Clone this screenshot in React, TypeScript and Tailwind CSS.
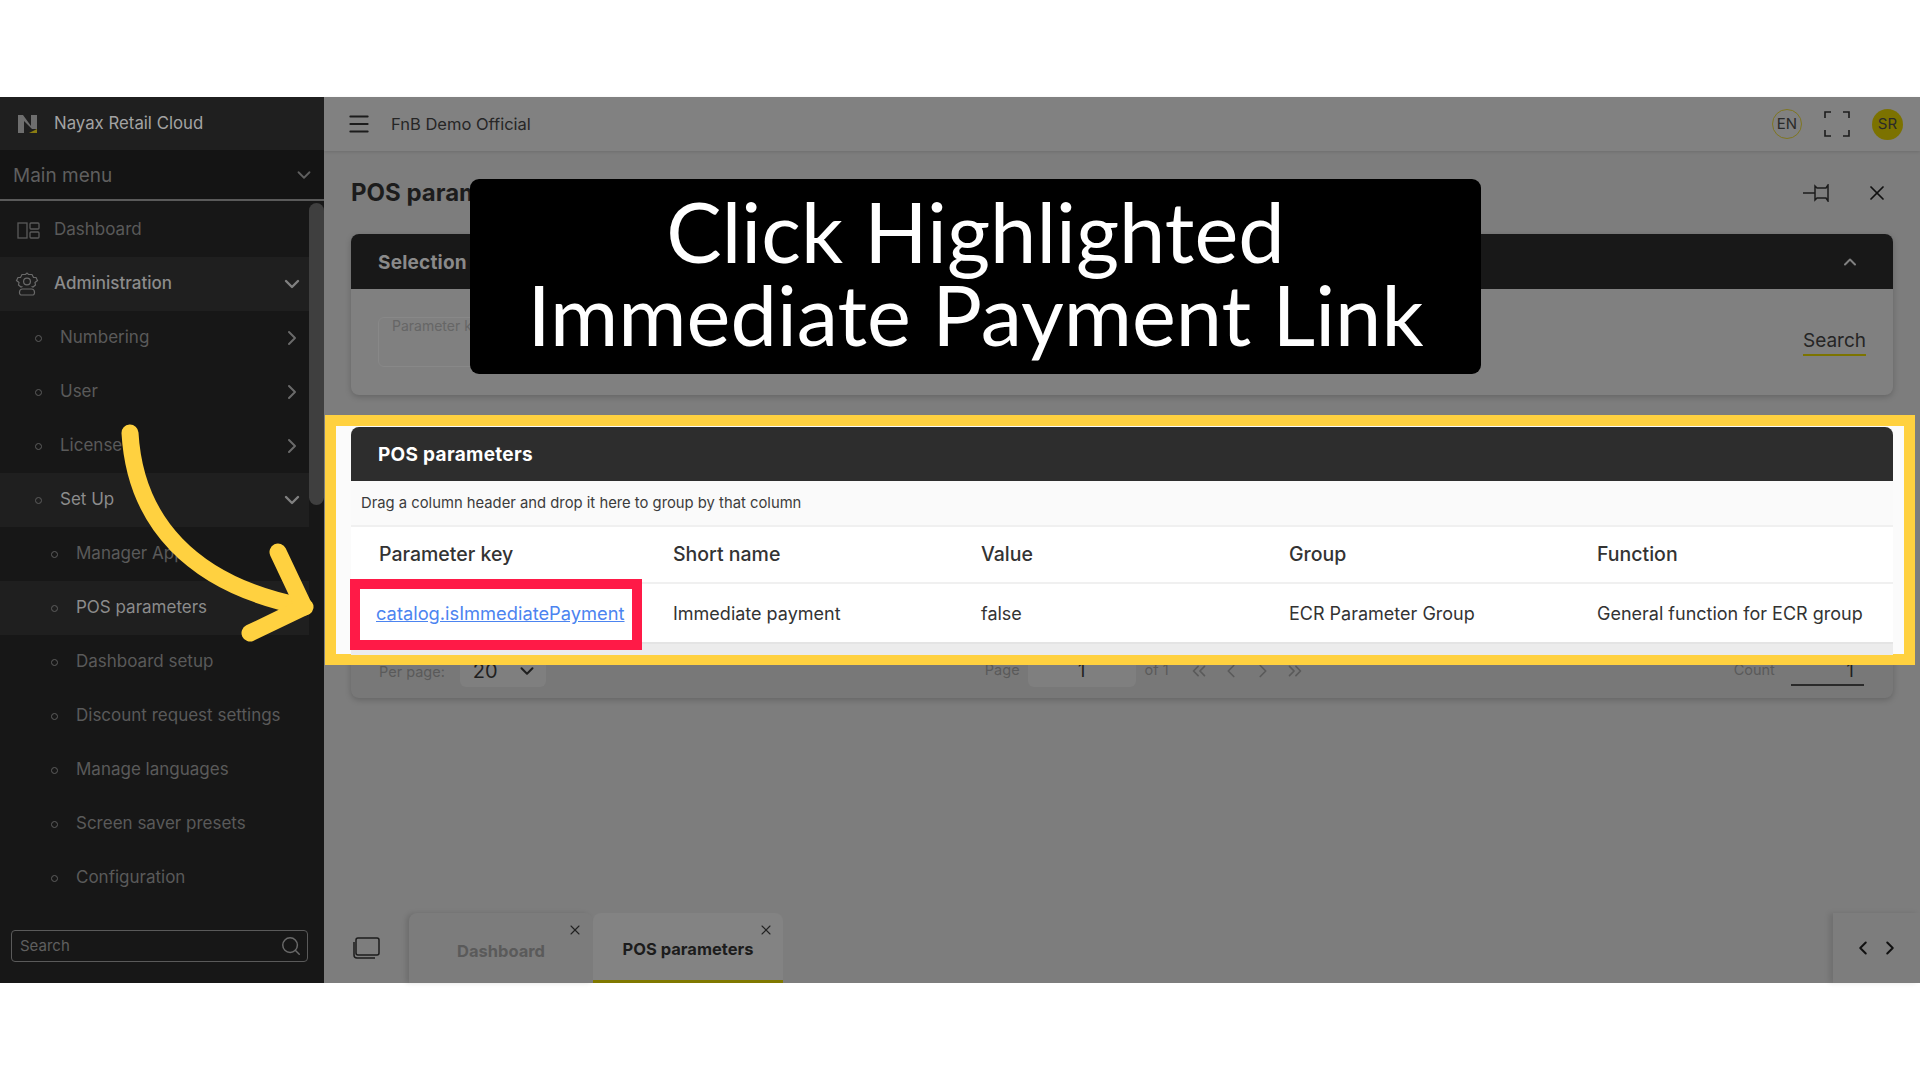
import { ChevronDown, ChevronLeft, ChevronRight, ChevronUp, ChevronsLeft, ChevronsRight, Menu, Search, X } from "lucide-react";

const menuRows = [
  { label: "Numbering", level: 1, chevron: "right" },
  { label: "User", level: 1, chevron: "right" },
  { label: "License", level: 1, chevron: "right" },
  { label: "Set Up", level: 1, chevron: "down", open: true },
  { label: "Manager App", level: 2 },
  { label: "POS parameters", level: 2, active: true },
  { label: "Dashboard setup", level: 2 },
  { label: "Discount request settings", level: 2 },
  { label: "Manage languages", level: 2 },
  { label: "Screen saver presets", level: 2 },
  { label: "Configuration", level: 2 },
];

const columns = ["Parameter key", "Short name", "Value", "Group", "Function"];

function MenuRow({ label, level, chevron, open, active }: { label: string; level: number; chevron?: string; open?: boolean; active?: boolean }) {
  const highlighted = open || active;
  return (
    <div className={`flex h-[54px] items-center ${highlighted ? "bg-[#1f1f1f]" : ""} ${level === 1 ? "pl-[35px]" : "pl-[51px]"}`}>
      <span className="h-[7px] w-[7px] rounded-full border border-[#5c5c5c]" />
      <span className={`ml-[18px] text-[17px] ${highlighted ? "text-[#8c8c8c]" : "text-[#5a5a5a]"}`}>{label}</span>
      {chevron === "right" && <ChevronRight className="ml-auto mr-[5px] h-[24px] w-[24px] text-[#6a6a6a]" strokeWidth={2} />}
      {chevron === "down" && <ChevronDown className="ml-auto mr-[5px] h-[24px] w-[24px] text-[#808080]" strokeWidth={2.4} />}
    </div>
  );
}

function Sidebar() {
  return (
    <aside className="relative flex w-[324px] shrink-0 flex-col bg-[#171717]">
      <div className="flex h-[53px] items-center bg-[#1f1f1f] pl-[18px]">
        <svg width="20" height="20" viewBox="0 0 20 20">
          <polygon points="0,1 5,1 13,12 13,1 19,1 19,15 14,15 6,7 6,19 0,19" fill="#6e6e6e" />
          <polygon points="11,19 19,15 19,19" fill="#8a7d12" />
        </svg>
        <span className="ml-[16px] pt-[1px] text-[16.8px] text-[#a3a3a3]">Nayax Retail Cloud</span>
      </div>
      <div className="flex h-[51px] items-center justify-between border-b-2 border-[#5a5a5a] bg-[#141414] pl-[13px] pr-[9px]">
        <span className="pt-[3px] text-[19px] text-[#5f5f5f]">Main menu</span>
        <ChevronDown className="h-[22px] w-[22px] text-[#5f5f5f]" strokeWidth={2} />
      </div>
      <div className="mt-[2px] w-[309px]">
        <div className="flex h-[54px] items-center pl-[17px]">
          <svg width="23" height="17" viewBox="0 0 23 17" fill="none" stroke="#5a5a5a" strokeWidth="1.3">
            <rect x="1" y="1" width="9" height="15" />
            <rect x="13" y="1" width="9" height="6" rx="1" />
            <rect x="13" y="10" width="9" height="6" rx="1" />
          </svg>
          <span className="ml-[14px] text-[17px] text-[#5a5a5a]">Dashboard</span>
        </div>
        <div className="flex h-[54px] items-center bg-[#1f1f1f] pl-[15px]">
          <svg width="24" height="24" viewBox="0 0 24 24" fill="none" stroke="#6a6a6a" strokeWidth="1.2">
            <path d="M7.5 14.5L6 15L3.5 13L4 10.5L1.5 8.5L3 5.5L5.5 5.5L7 2.5H10.5L12 1L13.5 2.5H17L18.5 5.5L21 5.5L22.5 8.5L20 10.5L20.5 13L18 15L16.5 14.5" />
            <circle cx="12" cy="9.5" r="3.4" />
            <path d="M6 23H18C20 23 20.5 17 16.5 17H7.5C3.5 17 4 23 6 23Z" />
          </svg>
          <span className="ml-[15px] text-[17px] font-medium text-[#8c8c8c]">Administration</span>
          <ChevronDown className="ml-auto mr-[5px] h-[24px] w-[24px] text-[#808080]" strokeWidth={2.4} />
        </div>
        {menuRows.map((row) => (
          <MenuRow key={row.label} {...row} />
        ))}
      </div>
      <div className="absolute right-0 top-[106px] h-[302px] w-[15px] rounded-full bg-[#3f3f3f]" />
      <div className="ml-[11px] mt-[25px] flex h-[32px] w-[297px] items-center justify-between rounded-[4px] border border-[#5a5a5a] pl-[8px] pr-[5px]">
        <span className="pt-[1px] text-[15px] text-[#5f5f5f]">Search</span>
        <Search className="h-[22px] w-[22px] text-[#6a6a6a]" strokeWidth={1.6} />
      </div>
    </aside>
  );
}

function Topbar() {
  return (
    <header className="flex h-[54px] shrink-0 items-center bg-[#818181] pl-[22px] pr-[17px] shadow-[0_1px_3px_rgba(0,0,0,0.12)]">
      <Menu className="h-[26px] w-[26px] text-[#1c1c1c]" strokeWidth={1.8} />
      <span className="ml-[19px] text-[16.5px] text-[#262626]">FnB Demo Official</span>
      <div className="ml-auto flex h-[30px] w-[30px] items-center justify-center rounded-full border border-[#7f7620] text-[15px] text-[#2a2a2a]">EN</div>
      <svg className="ml-[22px]" width="26" height="26" viewBox="0 0 26 26" fill="none" stroke="#1c1c1c" strokeWidth="1.6">
        <path d="M1 7V1H7M19 1H25V7M25 19V25H19M7 25H1V19" />
      </svg>
      <div className="ml-[22px] flex h-[31px] w-[31px] items-center justify-center rounded-full bg-[#7c7200] text-[15px] text-[#2a2a2a]">SR</div>
    </header>
  );
}

function SelectionCard() {
  return (
    <section className="h-[161px] rounded-[8px] bg-[#808080] shadow-[0_2px_6px_rgba(0,0,0,0.2)]">
      <div className="flex h-[55px] items-center justify-between rounded-t-[8px] bg-[#181818] pl-[27px] pr-[33px]">
        <span className="pt-[3px] text-[19px] font-bold tracking-[0.2px] text-[#8a8a8a]">Selection</span>
        <ChevronUp className="h-[20px] w-[20px] text-[#808080]" strokeWidth={2.4} />
      </div>
      <div className="flex items-start justify-between pl-[27px] pr-[27px] pt-[28px]">
        <div className="h-[50px] w-[200px] rounded-[6px] border border-[#888888] pl-[13px] text-[14px] leading-[16px] text-[#666666]">Parameter key</div>
        <span className="mt-[11px] border-b-2 border-[#7c7400] text-[19px] leading-[26px] text-[#252525]">Search</span>
      </div>
    </section>
  );
}

function ParametersCard() {
  return (
    <section className="relative mt-[32px]">
      {/* annotation frame sits over the pager, behind the live card */}
      <div className="absolute left-[-26px] top-[-12px] z-10 h-[250px] w-[1590px] border-[11px] border-[#ffd140] bg-[#fbfbfb]" />
      <div className="relative z-20 h-[228px] rounded-t-[8px] bg-[#ececec]">
        <div className="flex h-[54px] items-center rounded-t-[8px] bg-[#2d2d2d] pl-[27px] pt-[2px] text-[19px] font-bold tracking-[0.3px] text-white">POS parameters</div>
        <div className="flex h-[46px] items-center border-b-2 border-[#f0f0f0] bg-[#fafafa] pl-[10px] pt-[1px] text-[14.8px] text-[#3c3c3c]">
          Drag a column header and drop it here to group by that column
        </div>
        <div className="grid h-[57px] grid-cols-[294px_308px_308px_308px_1fr] items-center border-b-2 border-[#f0f0f0] bg-white pl-[28px] pt-[1px] text-[19.5px] font-medium text-[#333333]">
          {columns.map((col) => (
            <span key={col}>{col}</span>
          ))}
        </div>
        <div className="grid h-[60px] grid-cols-[294px_308px_308px_308px_1fr] items-center border-b-2 border-[#e4e4e4] bg-white pl-[28px] text-[18px] text-[#333333]">
          <span className="relative">
            <span className="absolute left-[-29px] top-[-20px] h-[71px] w-[292px] border-[10px] border-[#ff1a47] bg-white" />
            <a className="relative top-[1px] ml-[-3px] text-[18.3px] text-[#4c84f0] underline">catalog.isImmediatePayment</a>
          </span>
          <span>Immediate payment</span>
          <span>false</span>
          <span>ECR Parameter Group</span>
          <span>General function for ECR group</span>
        </div>
      </div>
      <div className="flex h-[43px] items-start rounded-b-[8px] bg-[#787878] pl-[28px] text-[14.5px] text-[#5a5a5a] shadow-[0_2px_6px_rgba(0,0,0,0.2)]">
        <span className="mt-[6px]">Per page:</span>
        <div className="ml-[15px] flex h-[32px] w-[86px] items-center justify-between rounded-b-[6px] bg-[#7f7f7f] pl-[13px] pr-[8px] text-[20px] text-[#1f1f1f]">
          20
          <ChevronDown className="h-[22px] w-[22px]" strokeWidth={2.2} />
        </div>
        <span className="ml-[439px] mt-[4px]">Page</span>
        <div className="ml-[8px] h-[32px] w-[108px] rounded-b-[6px] bg-[#7f7f7f] pt-[4px] text-center text-[18px] leading-[24px] text-[#1f1f1f]">1</div>
        <span className="ml-[9px] mt-[4px]">of 1</span>
        <div className="ml-[19px] mt-[5px] flex gap-[10px] text-[#5a5a5a]">
          <ChevronsLeft className="h-[22px] w-[22px]" strokeWidth={1.8} />
          <ChevronLeft className="h-[22px] w-[22px]" strokeWidth={1.8} />
          <ChevronRight className="h-[22px] w-[22px]" strokeWidth={1.8} />
          <ChevronsRight className="h-[22px] w-[22px]" strokeWidth={1.8} />
        </div>
        <span className="ml-[428px] mt-[4px]">Count</span>
        <div className="ml-[16px] h-[31px] w-[73px] border-b-2 border-[#2a2a2a] pr-[10px] pt-[4px] text-right text-[18px] leading-[24px] text-[#1f1f1f]">1</div>
      </div>
    </section>
  );
}

function TabsBar() {
  return (
    <footer className="mt-auto flex h-[70px] shrink-0 items-stretch">
      <div className="flex w-[85px] items-center justify-center">
        <svg width="27" height="22" viewBox="0 0 27 22" fill="none" stroke="#1c1c1c" strokeWidth="1.5">
          <rect x="3" y="1" width="23" height="17" rx="2" />
          <path d="M1 5V18C1 20 2 21 4 21H22" />
        </svg>
      </div>
      <div className="relative flex w-[184px] items-center justify-center rounded-t-[8px] bg-[#7c7c7c] pt-[6px] text-[16.5px] font-bold text-[#5a5a5a] shadow-[-3px_0_5px_rgba(0,0,0,0.12)]">
        Dashboard
        <X className="absolute right-[10px] top-[9px] h-[16px] w-[16px] text-[#222222]" strokeWidth={1.6} />
      </div>
      <div className="relative flex w-[190px] items-center justify-center rounded-t-[8px] border-b-[3px] border-[#807800] bg-[#838383] pt-[6px] text-[16.5px] font-bold text-[#1c1c1c]">
        POS parameters
        <X className="absolute right-[9px] top-[9px] h-[16px] w-[16px] text-[#222222]" strokeWidth={1.6} />
      </div>
      <div className="ml-auto flex w-[87px] items-center justify-center gap-[5px] shadow-[-4px_0_5px_rgba(0,0,0,0.1)]">
        <ChevronLeft className="h-[22px] w-[22px] text-[#111111]" strokeWidth={2.2} />
        <ChevronRight className="h-[22px] w-[22px] text-[#111111]" strokeWidth={2.2} />
      </div>
    </footer>
  );
}

export default function App() {
  return (
    <div className="relative flex h-screen w-full flex-col overflow-hidden bg-white font-['Inter',sans-serif]">
      <div className="h-[97px] shrink-0" />
      <div className="flex h-[886px] shrink-0">
        <Sidebar />
        <main className="flex min-w-0 flex-1 flex-col bg-[#7d7d7d]">
          <Topbar />
          <div className="px-[27px]">
            <div className="flex h-[83px] items-center justify-between pr-[4px]">
              <h1 className="text-[24px] font-bold text-[#1c1c1c]">POS parameters</h1>
              <div className="flex items-center gap-[35px]">
                <svg width="27" height="18" viewBox="0 0 27 18" fill="none" stroke="#1c1c1c" strokeWidth="1.5">
                  <path d="M0 9H12M12 2L14 4H23L25 1V17L23 14H14L12 16Z" />
                </svg>
                <X className="h-[24px] w-[24px] text-[#111111]" strokeWidth={1.7} />
              </div>
            </div>
            <SelectionCard />
            <ParametersCard />
          </div>
          <TabsBar />
        </main>
      </div>
      <div className="h-[97px] shrink-0" />

      {/* tutorial annotations */}
      <svg className="absolute left-0 top-0 z-30" width="340" height="660" fill="none" stroke="#ffd140" strokeWidth="17" strokeLinecap="round" strokeLinejoin="round">
        <path d="M130 433C135 520 190 585 305 607" />
        <path d="M278 552L304 607L250 633" />
      </svg>
      <div className="absolute left-[470px] top-[179px] z-30 flex h-[195px] w-[1011px] flex-col items-center justify-center rounded-[9px] bg-black pb-[7px] text-center font-['Lato',sans-serif] text-[83px] leading-[83px] text-white">
        <span>Click Highlighted</span>
        <span>Immediate Payment Link</span>
      </div>
    </div>
  );
}
